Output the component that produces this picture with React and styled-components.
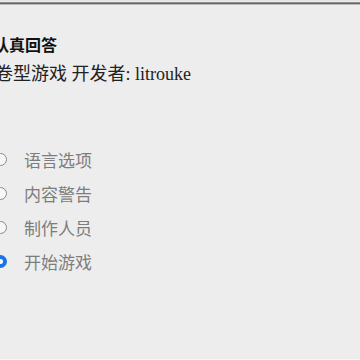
import React from 'react'
import styled, { createGlobalStyle } from 'styled-components'

const GlobalStyle = createGlobalStyle`
	html, body {
		margin: 0;
		padding: 0;
		background: #ededed;
		overflow: hidden;
	}
`

const Frame = styled.div`
	width: 360px;
	height: 360px;
	box-sizing: border-box;
	background: #ededed;
	border-top: 1px solid #e4e4e4;
	border-bottom: 1px solid #f6f6f6;
	overflow: hidden;
`

const TopRule = styled.div`
	height: 3px;
	margin-top: 1px;
	background: linear-gradient(#8e8e8e 0, #8e8e8e 1px, #666 1px, #666 2px, #bdbdbd 2px);
`

const Content = styled.div`
	display: flex;
	flex-direction: column;
	margin-left: -23px;
	padding-top: 27px;
`

const Title = styled.div`
	font-family: "Noto Sans CJK SC", "Liberation Sans", sans-serif;
	font-weight: 700;
	font-size: 16px;
	line-height: 24px;
	color: #111;
`

const Meta = styled.div`
	font-family: "Liberation Serif", "Noto Sans CJK SC", serif;
	font-size: 18px;
	line-height: 26px;
	color: #222;
	margin-top: 5px;
`

const Menu = styled.div`
	display: flex;
	flex-direction: column;
	gap: 10px;
	margin-top: 60px;
	padding-left: 17px;
`

const Option = styled.label`
	display: flex;
	align-items: center;
	gap: 17px;
	height: 24px;
	font-family: "Noto Sans CJK SC", sans-serif;
	font-size: 17px;
	color: #7d7d7d;
`

const Radio = styled.span`
	width: 13px;
	height: 13px;
	box-sizing: border-box;
	border-radius: 50%;
	flex: none;
	border: ${p => (p.$checked ? '4px solid #1a73e8' : '1px solid #8a8a8a')};
	background: ${p => (p.$checked ? '#fff' : '#f7f7f7')};
`

const options = [
	{ label: '语言选项' },
	{ label: '内容警告' },
	{ label: '制作人员' },
	{ label: '开始游戏', checked: true },
]

export default function App() {
	return (
		<Frame>
			<GlobalStyle />
			<TopRule />
			<Content>
				<Title>请认真回答</Title>
				<Meta>问卷型游戏 开发者: litrouke</Meta>
				<Menu>
					{options.map(o => (
						<Option key={o.label}>
							<Radio $checked={o.checked} />
							{o.label}
						</Option>
					))}
				</Menu>
			</Content>
		</Frame>
	)
}
